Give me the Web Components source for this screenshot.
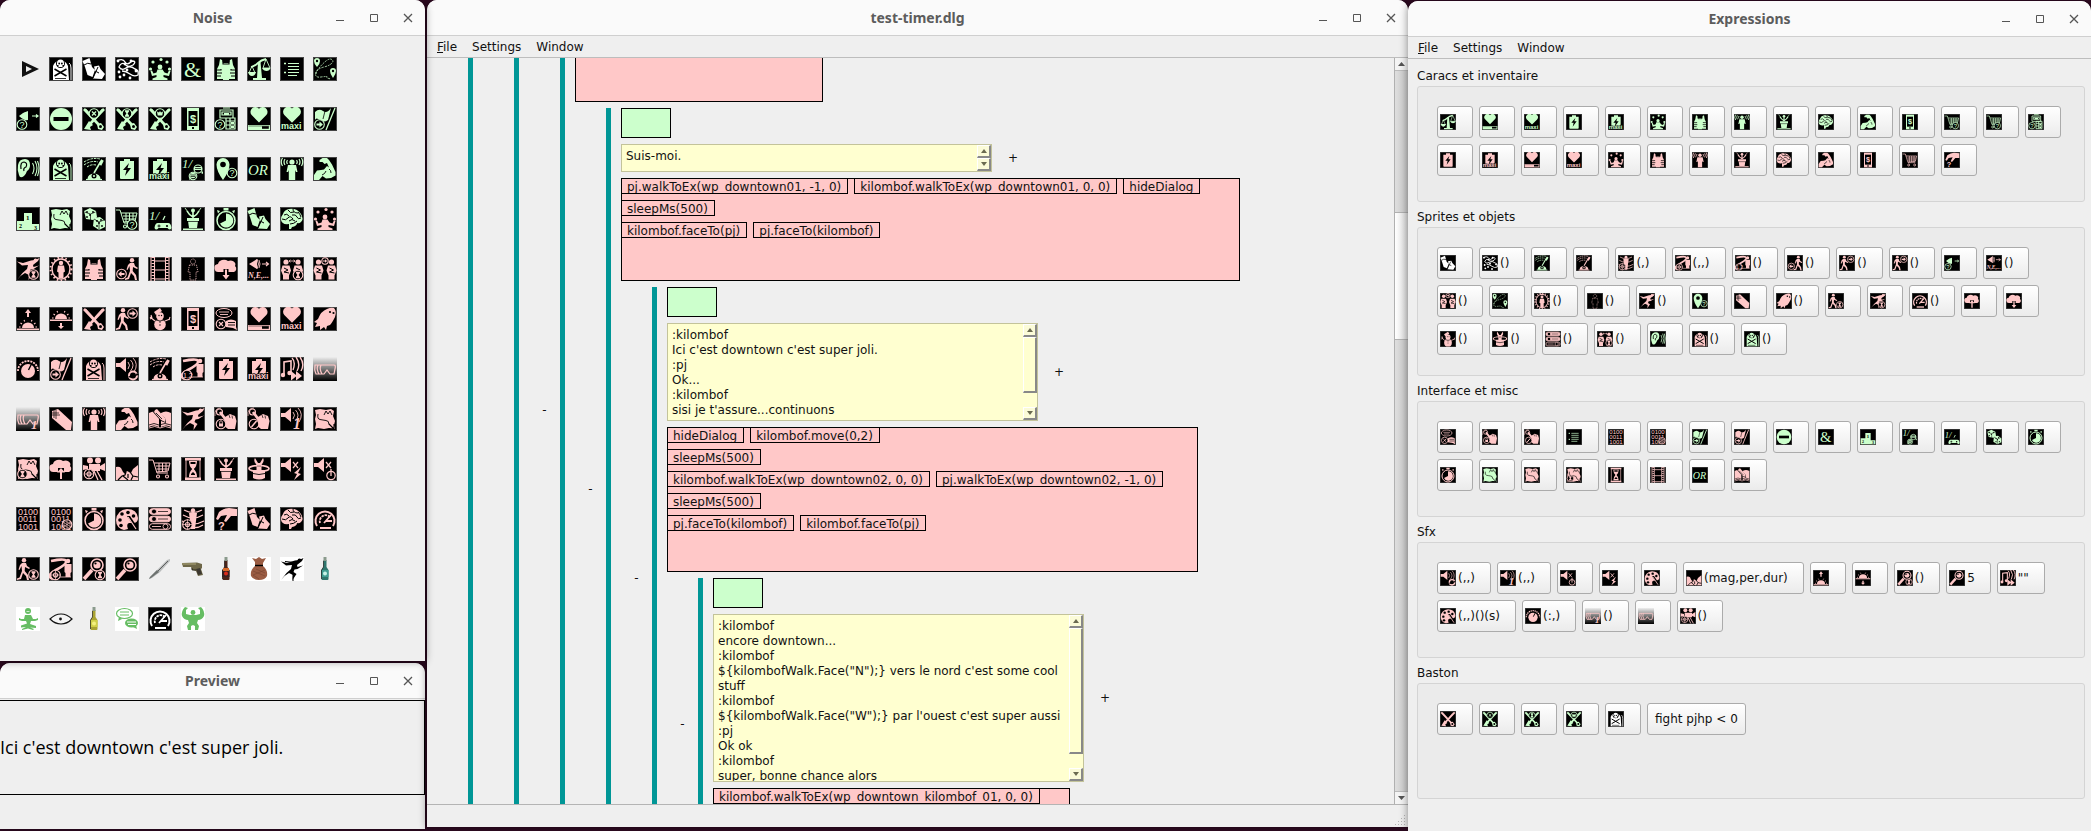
<!DOCTYPE html>
<html lang="fr">
<head>
<meta charset="utf-8">
<title>test-timer.dlg</title>
<style>
html, body { margin: 0; min-height: 100%; }
body { background: #2f0a22; font: 12px/15px "DejaVu Sans", sans-serif; color: #111; }
</style>
</head>
<body>
<desk-top>
  <div slot="left">
    <desk-window heading="Noise" class="over">
      <icon-palette icons="play:x grave:w boots:w trail:w juggle:g amp:g vest:g scales:g list:g route:g
        lookq:g noentry:g fightx:g fighth:g fightc:g phone:g atm:g heartbar:g heartmaxi:g flag:g
        ear:g grave:g lever:g batt:g battmaxi:g onetalk:g pinq:g or:g charisma:g arm:g
        podium:g map:g dice:g cartq:g onepad:g pot:g timer:g boots:g brain:g juggle:p
        jumpi:p aura:p vest:p walkout:p film:p hidden:p clouddown:p lookdir:p facing:p meet:p
        sunup:p sundown:p swords:p walkin:p snowman:p phone:p talkx:p heartbar:p heartmaxi:p ghost:p
        knob:p flag:p grave:p sndloop:p lever:p roadone:p batt:p battmaxi:p music:p vr:p
        vrone:p log:p charisma:p arm:p book:p jump:p touchlock:p touchno:p sndone:p map:p
        mapi:p cloudup:p camera:p quake:p cart:p hourglass:p pot:p rabbit:p sndbolt:p sndoff:p
        bin:p binx:p timer:p palette:p sliders:p vortex:p handq:p boots:p brain:p gauge:p
        walki:p roadx:p magi:p mag:p knife:x gun:x bottler:x sack:b runner:b bottlet:x
        yoga:b eye:x bottley:x bubbles:b gauge:w muscle:b"></icon-palette>
    </desk-window>
    <desk-window heading="Preview" class="fill">
      <line-preview>Ici c'est downtown c'est super joli.</line-preview>
    </desk-window>
  </div>
  <desk-window slot="middle" heading="test-timer.dlg" class="fill">
    <menu-bar></menu-bar>
    <dialog-tree>
      <dialog-node bare>
        <dialog-node bare>
          <dialog-node lines="" rows="28" box="82" wide="248" code="">
            <dialog-node lines="Suis-moi." rows="28" box="103" wide="619"
              code="pj.walkToEx(wp_downtown01, -1, 0)|kilombof.walkToEx(wp_downtown01, 0, 0)|hideDialog;sleepMs(500);kilombof.faceTo(pj)|pj.faceTo(kilombof)">
              <dialog-node rows="98" box="145" wide="531" thumb="56"
                lines=":kilombof&#10;Ici c'est downtown c'est super joli.&#10;:pj&#10;Ok...&#10;:kilombof&#10;sisi je t'assure...continuons"
                code="hideDialog|kilombof.move(0,2);sleepMs(500);kilombof.walkToEx(wp_downtown02, 0, 0)|pj.walkToEx(wp_downtown02, -1, 0);sleepMs(500);pj.faceTo(kilombof)|kilombof.faceTo(pj)">
                <dialog-node rows="168" box="82" wide="357" thumb="126"
                  lines=":kilombof&#10;encore downtown...&#10;:kilombof&#10;${kilombofWalk.Face(&quot;N&quot;);} vers le nord c'est some cool stuff&#10;:kilombof&#10;${kilombofWalk.Face(&quot;W&quot;);} par l'ouest c'est super aussi&#10;:pj&#10;Ok ok&#10;:kilombof&#10;super, bonne chance alors"
                  code="kilombof.walkToEx(wp_downtown_kilombof_01, 0, 0)"></dialog-node>
              </dialog-node>
            </dialog-node>
          </dialog-node>
        </dialog-node>
      </dialog-node>
    </dialog-tree>
  </desk-window>
  <desk-window slot="right" heading="Expressions" class="fill">
    <menu-bar class="spaced"></menu-bar>
    <expression-group heading="Caracs et inventaire" items="scales:g heartbar:g heartmaxi:g batt:g battmaxi:g juggle:g vest:g charisma:g pot:g brain:g arm:g phone:g cartq:g cartq:g atm:g batt:p battmaxi:p heartbar:p heartmaxi:p juggle:p vest:p charisma:p pot:p brain:p arm:p phone:p cart:p handq:p"></expression-group>
    <expression-group heading="Sprites et objets" items="boots:w trail:w:() lever:g lever:p vortex:p:(,) roadx:p:(,,) roadone:p:() walkout:p:() walkin:p:() walkin:p:() lookq:g lookdir:p:() meet:p:() route:g aura:p:() hidden:p:() jump:p:() pinq:g log:p ghost:p:() walki:p jumpi:p gauge:p:() cloudup:p clouddown:p snowman:p:() rabbit:p:() sliders:p:() facing:p:() ear:g grave:p:() grave:g:()"></expression-group>
    <expression-group heading="Interface et misc" items="talkx:p touchlock:p touchno:p list:g bin:p binx:p flag:g flag:p noentry:g amp:g podium:g onetalk:g onepad:g dice:g timer:g timer:p map:g map:p mapi:p hourglass:p film:p or:g book:p"></expression-group>
    <expression-group heading="Sfx" items="sndloop:p:(,,) sndone:p:(,,) sndoff:p sndbolt:p palette:p quake:p:(mag,per,dur) sunup:p sundown:p magi:p:() mag:p:5 music:p:&quot;&quot; palette:p:(,,)()(s) knob:p:(:,) vrone:p:() vr:p camera:p:()"></expression-group>
    <expression-group heading="Baston" items="swords:p fightx:g fighth:g fightc:g grave:w none:x:fight_pjhp_&lt;_0"></expression-group>
  </desk-window>
</desk-top>

<script>
/* ---------- icon drawings, on a 24 by 24 grid ---------- */
const line = (d, w = 1.2) => `<path d="${d}" fill="none" stroke="currentColor" stroke-width="${w}"/>`;
const cut = (d, w = 1.2) => `<path d="${d}" fill="none" stroke="#000" stroke-width="${w}"/>`;
const area = d => `<path d="${d}"/>`;
const hole = d => `<path d="${d}" fill="#000"/>`;
const dot = (x, y, r) => `<circle cx="${x}" cy="${y}" r="${r}"/>`;
const pit = (x, y, r) => `<circle cx="${x}" cy="${y}" r="${r}" fill="#000"/>`;
const ring = (x, y, r, w = 1.1) => `<circle cx="${x}" cy="${y}" r="${r}" fill="#000" stroke="currentColor" stroke-width="${w}"/>`;
const word = (t, x, y, size, extra = '') => `<text x="${x}" y="${y}" font-size="${size}" ${extra}>${t}</text>`;
const paint = (d, c) => `<path d="${d}" fill="${c}"/>`;
const sans = 'font-family="Liberation Sans, sans-serif"';
const serif = 'font-family="Liberation Serif, serif"';

const ask = (x, y) => ring(x, y, 4.8) + word('?', x - 2.5, y + 3.2, 9, sans);
const glass = (x, y) => ring(x, y, 4.8) + area(`M${x - 2} ${y - 3.2}h4v1.2l-1.4 2 1.4 2v1.2h-4v-1.2l1.4-2-1.4-2z`);
const cross = (x, y) => ring(x, y, 4.8) + line(`M${x - 2} ${y - 2}l4 4m0-4l-4 4`);
const target = (x, y) => ring(x, y, 4.8) + ring(x, y, 2) + line(`M${x - 5} ${y}h10M${x} ${y - 5}v10`, .7);
const right = (x, y) => ring(x, y, 4.8) + area(`M${x - 3} ${y - 1}h3v-2l3.4 3-3.4 3v-2h-3z`);
const left = (x, y) => ring(x, y, 4.8) + area(`M${x + 3} ${y - 1}h-3v-2l-3.4 3 3.4 3v-2h3z`);
const speaker = area('M1 6h4l6-5v14l-6-5H1z');
const rings = line('M13 5q3 3 0 7M15.500 3q5 5 0 11M18 1q6 6 1 14', .9);
const walker = dx => `<g transform="translate(${dx} 0)">` + dot(7, 3.2, 2.2) + area('M5 6h4l1 3 3 2-1 1-4-2-.3 4 3.300 4 1 5h-2l-1-4-3-3-2 6-4 1 0-1.500 2.500-1L5 14 4.500 9l-2 4-1-.6L3 8z') + '</g>';
const runner = dot(19.500, 3.300, 1.900) + area('M23.500 1l-1.500 3-5 4 .5 2 5.500-1.500-5.500 3.500-3 .5-1 2.500 3 2-4 6 .5-5-4-2-4.500 3L1 23l5.500-7L11 12l1-4-6 .5L1 4.500l6 1.500 8-2.500 4-.5z');
const cloud = area('M5 15a4 4 0 0 1-1-8 6 5 0 0 1 10-3 5 4 0 0 1 7 5 3.500 3.500 0 0 1-1 6z');
const heart = (y, s) => `<path transform="translate(12 ${y}) scale(${s})" d="M0 8L-7 1A4 4 0 0 1 0-5 4 4 0 0 1 7 1z"/>`;
const cell = area('M9 2h6v2h4v17q0 1-1 1H6q-1 0-1-1V4h4z') + hole('M14 6l-6 7h3.500l-1.500 6 6-8h-3.500z');
const maxi = word('maxi', 1, 22, 9, sans + ' font-weight="bold" stroke="#000" stroke-width="1.500" paint-order="stroke"');
const cartShape = line('M1 3h4l4 13h11M6 6h16l-2 8-11 1M8 9h13M8.500 12h12M11 6v9M14.500 6v9M18 6v9', 1) + ring(10, 19.500, 1.500) + ring(19, 19.500, 1.500);
const mapShape = area('M2 3l5-1 6 1 5-1 3 2-1 5 2 5-1 4 1 4-6-1-5 1-6-1-3 1 1-5-1-5 1-4z') + cut('M5 7q-1 5 2 5.500t6 1q3 0 3 4', .9) + cut('M11 8l2-4 2 3 2-3 2 4', .9) + cut('M16 17l5 5m0-5v5h-5', 1.1);
const blades = line('M2 2l15 16M22 2L8 17', 2.6) + line('M4 2l8 9M20 2l-7 8', .8) + area('M2 22l5-8 4 4-3 2 1 3zM22 20l-2 3-4-1-1-5 4-1z') + pit(18.500, 19.500, 1.500);
const graveShape = area('M4 23V9a8 8 0 0 1 15 0l1 14z') + line('M20 6q2 1 2 5v12', 1) + pit(11.500, 6.500, 4.500) + area('M8 6a3.500 3.500 0 0 1 7 0v2h-1.500v2h-4V8H8z') + pit(10.200, 6.500, .9) + pit(12.900, 6.500, .9) + cut('M5.500 12l12 7M17.500 12l-12 7', 1.5) + cut('M6 21.500h11', .8);
const magShape = line('M2 22L10 13', 3.6) + ring(15, 8, 6, 1.6) + dot(15, 8, 3.6) + pit(13.500, 6.500, 1.1);
const visor = `<defs><linearGradient id="v" x2="0" y2="1"><stop offset="0" stop-color="#eee"/><stop offset="1" stop-color="#000"/></linearGradient></defs><rect width="24" height="24" fill="url(#v)"/>` + line('M2 8h19q2 0 1 4l-1 5h-4l-3-4-3 4H3q-2-4-1-9zM5 8q-2 4 1 9M8 8q-2 4 1 9');
const binary = word('0100', 2, 7.500, 9, sans) + word('0011', 2, 15, 9, sans) + word('1001', 2, 22.500, 9, sans);
const road = line('M2 4q14-3 15 0T7 13 4 22', 2.6) + dot(19, 4, 2.3) + area('M15.500 7h7v8l-1 1v4h-5v-4l-1-1z') + line('M11 20h11', .8);
const touch = ring(5.500, 5, 3) + line('M6 5l6 8', 2.8) + area('M11 10l5-3 5 2 1.500 5-1.500 8h-7l-5-4-4-4q1-2 6 1z') + cut('M15 8l1 3M18 8.500l.5 3', .7) + line('M1 9q-1-8 6-8', .7);
const sunRays = y => area(`M6 ${y}a6 5.500 0 0 1 12 0z`) + line(`M3 ${y - 1}h1.600M19.500 ${y - 1}H21M4.500 ${y - 5}l1.500 1M19.500 ${y - 5}l-1.500 1M8 ${y - 8}l.7 1.500M16 ${y - 8}l-.7 1.500`, 1.1);
const bust = x => dot(x, 5, 2.6) + area(`M${x - 3.500} 8.500h7l1.500 5-2 5v4h-6v-4l-2-5z`) + cut(`M${x - 2} 11l4 2-4 2 5 1`, 1);
const flagShape = area('M2 5q4-4 8-1t8-3L15 13q-4 3-8 0t-5 0z') + line('M22 1L13 23', 1.3) + cut('M12 4l-2 8', .8);
const bottle = (body, label, mark) => paint('M10.500 3h3v7l2 3v9q0 1-1 1h-5q-1 0-1-1v-9l2-3z', body) + paint('M10.500 0h3v4h-3z', '#8a9a8c') + paint('M8.500 13h7v7h-7z', label) + `<circle cx="12" cy="16.500" r="2" fill="${mark}"/>` + cut('M10.500 4v6l-2 3v9', .6);

const ICONS = {
  play: '<path fill-rule="evenodd" fill="#111" d="M6 4l17 8L6 20zM10 9v6l6-3z"/>',
  grave: graveShape,
  boots: area('M.5 4L7.500 1l2.500 9 3 3-2.500 7-5-2L3 10zM12 9.500l5-1 1.500 3.500 4.500 5-3 5-9-.5 2.500-6z') + cut('M2 8q4-3 7-1M11 21l5-11M13 14l4 2', 1),
  trail: line('M2 4q6-3 8 1t7-1q5 0 1 4-6 3-8-1-4-2-6 3 3 4 7 1t9 1q4 1 3 6-4 2-8-1t-8-3', 1.3) + [[3, 4], [10, 7], [16, 4], [4, 15], [12, 13], [21, 14], [5, 20], [9, 18], [15, 21]].map(p => dot(p[0], p[1], 1.400)).join(''),
  juggle: [[5, 5], [13, 2.500], [19, 5], [2.500, 12], [21.500, 12]].map(p => dot(p[0], p[1], 1.600)).join('') + dot(12, 10, 2.400) + area('M9.500 12.500h5l2 3 3 1 1.500-3 1.500.5-1.500 5-5.500-1v2l4 1.500V23h-15v-1.500l4-1.500v-2L4 19l-1.500-5 1.500-.5 1.500 3 3-1z'),
  amp: word('&amp;', 3, 20, 22, serif),
  vest: area('M6 2l2 1 1 3h6l1-3 2-1 1 6 2 4v10h-6v1H9v-1H3V12l2-4z') + cut('M9 4v3h6V4M2 13h5v-1M2 16h6M2 19h5M22 13h-5v-1M22 16h-6M22 19h-5', 1.1),
  scales: line('M4 10q4-1 7-4t8-4', 1.800) + area('M11 5h2.500l1.500 16H10zM6 21h13v2H6z') + line('M5 9l-3 7h6zM19 2l-3 9h7z', .9) + area('M1 15h8q-1 4-4 4t-4-4zM15 11h8.500q-1 3-4 3t-4.500-3z'),
  list: line('M8 6.500h11M8 9.500h11M8 12.500h11M8 15.500h11M8 18.500h9', 1) + line('M4 6.500h2M4 15.500h2', 1.500),
  route: area('M4 1a3 3 0 0 1 3 3q0 3-3 6-3-3-3-6a3 3 0 0 1 3-3zM20 11a3 3 0 0 1 3 3q0 3-3 7-3-4-3-7a3 3 0 0 1 3-3z') + pit(4, 4, 1.200) + pit(20, 14, 1.200) + `<path d="M3 17q0-5 8-7t9-6q-2-4-7 0T3 15q-2 6 5 5t6 0 4 2" fill="none" stroke="currentColor" stroke-width=".8" stroke-dasharray="2 1"/>`,
  lookq: area('M3 9l4-3 5-2v9q-4 1-9-4z') + line('M9 5q3 3 1 8', 1) + line('M16 9h6M20 7.500l2 1.500-2 1.500', 1.200) + ask(6, 17.500),
  noentry: dot(12, 12, 11) + hole('M4.500 10h15v4h-15z'),
  fightx: blades + cross(12, 6.500),
  fighth: blades + glass(12, 6.500),
  fightc: blades + ring(12, 6.500, 4.800) + area('M9 4.500l2 1 1-1.500 1 1.500 2-1-.7 4h-4.600z'),
  phone: area('M6 1h12v22H6z') + hole('M7.500 4h9v15h-9z') + hole('M11 20h2v2h-2z') + word('$', 9, 15.500, 11, sans + ' font-weight="bold"'),
  atm: line('M6 3h13v8H6zM9 1h7M8 5h9v3H8zM12 11h9v11h-9zM12 14h9M12 18h9M16 11v11') + area('M10 6h5v2h-5zM17 15h3v2h-3zM17 19h3v2h-3z') + ask(6, 17.500),
  heartbar: heart(7, 1.050) + area('M1 18h22v5H1z') + hole('M15 19.200h6.800v2.600H15z') + cut('M1.500 19h21', .5),
  heartmaxi: heart(7, 1.100) + maxi,
  flag: flagShape + right(6.500, 17.500),
  ear: area('M9 2q5 0 5 6 0 4-3 6-1 3-3 5-4 3-5-1-2-5-1-10 1-6 7-6z') + cut('M5 12q-1-7 3-7 4 1 2 5-3 1-2 4', 1.200) + line('M16.500 6q3 5 0 11M19 4q4 7 0 15M21.500 4q3 7 0 15', 1.100),
  lever: line('M12 16L19 4', 1.600) + line('M18 8l2.500-5', 2.800) + area('M5.500 22a6.500 5.500 0 0 1 13 0z') + pit(12, 19, 2.500) + dot(12, 19, 1.100) + `<path d="M2 5q8-5 16-3M2 8q7-5 14-3M5 10q4-3 9-2" fill="none" stroke="currentColor" stroke-dasharray="2.500 1"/>` + line('M4 22.500h16'),
  batt: cell,
  battmaxi: cell + maxi,
  onetalk: word('1/', 1, 11, 13, serif + ' font-style="italic"') + ring(17, 12, 4) + area('M13 10h8v3h-8z') + ring(12, 19, 3.800) + dot(12, 18.500, 2.800) + cut('M10 18h4M10 19.500h4M14 11.500h6', .7) + area('M8 23l3-2-2-1zM20 16l2 1 0-3z'),
  pinq: area('M9 1a6.500 6.500 0 0 1 6.500 6.500Q15.500 14 9 23 2.500 14 2.500 7.500A6.500 6.500 0 0 1 9 1z') + pit(9, 7.500, 2.800) + ask(18, 16),
  or: word('OR', 1, 17.500, 15, serif + ' font-style="italic"'),
  charisma: dot(12, 5, 2.600) + area('M8 8h8l1.500 7H16l-.8-2v10H8.800V13L8 15H6.500z') + line('M7.500 3q-1.500 2 0 4M5 2Q3 5 5 8M2.500 1q-2.500 4 0 8M16.500 3q1.500 2 0 4M19 2q2 3 0 6M21.500 1q2.500 4 0 8'),
  arm: area('M6.500 3l3-2H14l2 2 3 4.500 3.500 7.500v3.500L18 21l-5 .5-3.500-2.500L6 23H1v-5l3-4.500 4-.5 3-.5 3-3.500 2 1.500-2-4.500-2.500 1-2-2H6.500z') + cut('M9 18q3-1 4-4M16 12q2 1 2 4', .9),
  podium: area('M8 6h8v11h7v6H1v-9h7z') + `<g fill="#000">${word('1', 10, 13, 7, serif + ' font-weight="bold"')}${word('2', 3, 20.500, 6, serif + ' font-weight="bold"')}${word('3', 18, 22.500, 6, serif + ' font-weight="bold"')}</g>`,
  map: mapShape,
  mapi: mapShape + glass(6.500, 17),
  dice: area('M2 4l6-3 6 3 1 6-4 3-7-1zM12 11l6-1 5 4 0 6-6 3-6-4z') + [[5, 5], [8, 8], [11, 5], [5, 10], [15, 14], [19, 13], [15, 19], [20, 19], [17, 16]].map(p => pit(p[0], p[1], .9)).join('') + cut('M2.500 5l6 2 5-2M8.500 7l0 6M12 12l5 3 5-2M17 15v8', .7),
  cart: cartShape,
  cartq: cartShape + ask(17, 17.500),
  onepad: word('1/', 1, 13, 13, serif + ' font-style="italic"') + area('M10 16h10q3 0 3.500 5-1.500 3-4 0h-9q-2.500 3-4 0 .5-5 3.500-5z') + cut('M9.500 19h3M11 17.500v3', .9) + pit(19, 19, 1.100) + line('M17 9l-2 4'),
  pot: area('M6 11h12v3h-1l-1 7H8l-1-7H6zM2 21.500h20V23H2z') + line('M12 11V5M12 10Q8 8 6 4M12 10q4-2 6-6', 1.600) + dot(12, 3.500, 2) + cut('M7 14.500h10', .7) + line('M4 1l3 4M20 1l-3 4', .9),
  timer: ring(12, 13.500, 9, 1.500) + area('M12 6.500a7 7 0 1 1-6 10L12 13.500z') + area('M9.500 1h5v2.500h-5zM3 3l3 1-2 2.500zM21 3l-3 1 2 2.500z'),
  brain: area('M3 7q1-4 6-5 8-1 12 5 3 5 0 8-2 2-4 1 0 3-5 4l-1 2h-2l0-5q-7 1-8-4 0-4 2-6z') + cut('M4 8q3-2 5 1M8 3q2 4 6 2M13 2q0 4 5 4M2 12q4 2 6-1t5 1M12 8q4-1 5 2t4 1M9 14q3-3 6 0M18 5q2 2 3 5M10 17q4 0 7-3', 1),
  jump: runner,
  jumpi: runner + glass(17.500, 17.500),
  aura: `<ellipse cx="12" cy="12" rx="9" ry="10" fill="none" stroke="currentColor" stroke-width="1.500"/>` + `<ellipse cx="12" cy="12" rx="10.500" ry="11.500" fill="none" stroke="currentColor" stroke-width="2" stroke-dasharray="1.500 2.500"/>` + dot(12, 6, 2.200) + area('M9 8.500h6l1 6-1.500 1V21h-5v-5.500L8 14.500z'),
  walkout: walker(10) + left(6.500, 17),
  walkin: walker(1) + right(17.500, 6.500),
  walki: walker(1) + glass(17.500, 17.500),
  film: line('M3 0v24M6.500 0v24M17.500 0v24M21 0v24M6 4h12M6 13h12M6 22h12', 1.100) + `<path d="M4.800 0v24M19.300 0v24" stroke="currentColor" stroke-width="2.500" stroke-dasharray="1 2"/>`,
  hidden: `<g fill="none" stroke="currentColor" stroke-width=".8" stroke-dasharray="1.200 1">${dot(12, 4.500, 2.500)}${area('M8.500 8h7l1.500 7h-2v8h-6v-8H7z')}</g>`,
  clouddown: cloud + hole('M9.500 12h5v5h-5z') + area('M11 12.500h2V18h2.500L12 22.500 8.500 18H11z'),
  cloudup: cloud + hole('M9 11h6v4H9z') + area('M12 11l4 4.500h-3V22h-2v-6.500H8z'),
  lookdir: area('M2 7l8-5v10z') + line('M10 2q3 5 0 10M12 3q2 4 0 8', .9) + line('M15 7h7M19 5l2.500 2L19 9', 1.100) + word('N,E,...', 1, 21, 8, serif + ' font-style="italic" font-weight="bold"'),
  facing: bust(6) + bust(18) + line('M9 4h6M10.500 2.800L9 4l1.500 1.200M13.500 2.800L15 4l-1.500 1.200', .8) + glass(18, 18),
  meet: bust(5.500) + bust(18.500) + ring(12, 4, 3.200) + area('M10 3.500h2V2.200L14.200 4 12 5.800V4.500h-2z'),
  sunup: sunRays(21) + area('M1 21.500h22V23H1zM12 2l3 4h-2v4h-2V6H9z'),
  sundown: sunRays(12) + area('M1 12.500h22V14H1zM12 22l-3-3h2v-3h2v3h2z'),
  swords: blades,
  snowman: dot(12, 9, 3.800) + dot(12, 17.500, 5.800) + area('M6 5l6-4 2 3-6 4z') + line('M7 14l-5-4M2 12l2-1M3 8l1 3M17 14l5-2M22 10l-1 3', 1.100) + pit(11, 8.500, .7) + pit(13.500, 8.500, .7) + pit(12, 15, .7) + pit(12, 18, .7) + cut('M8 13q4 2 8 0', .8),
  talkx: `<ellipse cx="10" cy="6" rx="8" ry="4.500" fill="none" stroke="currentColor"/>` + area('M12 14q5-3 10 0v6l1 3-4-2-7-1z') + line('M5 5h10M6 7.500h8', .9) + cut('M14 15.500h7M14 18h7', .9) + cross(7, 17),
  ghost: area('M21 1q3 3 1 9-3 6-5 8l-3 1-1 4-2-3-4 3v-4l-5 1 2-4-3-1 4-3q3-8 9-10 4-2 7-1z') + pit(17, 5, 1.100) + pit(20.500, 6, 1.100),
  knob: dot(12, 14, 7) + cut('M12.500 13l3-6', 1.400) + `<path d="M2 14a10 10 0 0 1 20 0" fill="none" stroke="currentColor" stroke-width="1.800" stroke-dasharray="2 1"/>`,
  sndloop: speaker + rings + ring(18, 18.500, 4, 2) + hole('M13 20l3-2 1 3zM20 19l2-3 2 2z'),
  roadone: road + ring(6, 18, 4.800) + word('1,2', 2, 20.500, 7, sans),
  roadx: road + target(6.500, 18),
  music: line('M4 17V5l7-1v11', 1.600) + dot(3, 18, 2.200) + dot(9.500, 16, 2.200) + line('M12 1q4 4 1 12M16 0q5 7 1 14M20 0q5 7 1 14', 1.400) + area('M11 14l5 4v-4l6 5-6 4.500v-4l-5 4z'),
  vr: visor,
  vrone: visor + word('1', 15, 22, 13, serif + ' font-style="italic" font-weight="bold"'),
  log: area('M3 4l6-2 14 13-1 8h-5L3 11z') + cut('M5 3v8M7 3v9M3 6h7M3 8h8', .7),
  book: area('M1 6q5-3 10 0v14q-5-3-10 0zM23 6q-5-3-10 0v14q5-3 10 0z') + hole('M7 2l10 9 1 5-5-2L5 5z') + area('M7 3l2-1 8 9v4l-4-2-7-8z') + cut('M8 6l6 6M1 18q5-3 10 0 6-3 12 0', .8) + line('M1 21q6-3 11 0 5-3 11 0', .9),
  touchlock: touch + ring(7, 17, 4.800) + area('M5 16.500h4v3H5z') + line('M5.700 17v-2a1.300 1.300 0 0 1 2.600 0v2', .8),
  touchno: touch + ring(7, 17, 4.800) + line('M4.500 20L9.500 14', 1.500),
  sndone: speaker + rings + word('1', 13, 22, 16, serif + ' font-style="italic" font-weight="bold"'),
  camera: dot(8, 3.500, 3) + dot(16, 3.500, 3) + area('M7 7h11v2l5-3v8l-5-2v2H7zM1 8l5 1v3l-5 1z') + line('M12 14l4 9M15 14l5 9', 1.300) + target(7, 17),
  quake: area('M1 10q3-1 5 1l2 4 2 2 2-3 4 2 2-4 5-4v15H1z') + cut('M3 23l4-4 3-1 1-3M8 19l5 4M23 20l-5-1-3-4M18 19l-2 4M13 17v4', 1.200),
  hourglass: area('M4 1h16v2.500H4zM4 20.500h16V23H4zM8 4h8q0 5-3.200 8Q16 15 16 20H8q0-5 3.200-8Q8 9 8 4z') + line('M5 3v18M19 3v18', .9) + hole('M9.500 5h5v2h-5zM10 17l2-2 2 2v1h-4z'),
  rabbit: area('M6 13h12v8q-6 3-12 0zM9.500 8Q6 4 8 1l3 5h2l3-5q2 3-1.500 7v5h-5z') + `<ellipse cx="12" cy="11.500" rx="10" ry="3" fill="none" stroke="currentColor" stroke-width="1.600"/>` + cut('M6 16.500q6 2 12 0', .9) + pit(11, 9, .6) + pit(13, 9, .6),
  sndbolt: speaker + line('M13 5l5 6M18 5l-5 6', 1.200) + area('M21 10l-7 6 3 1-3 6 7-6-3-1z'),
  sndoff: speaker + line('M13 5l5 6M18 5l-5 6', 1.200) + ring(18, 18.500, 4.200, 1.200) + line('M18 12v7', 1.300),
  bin: binary,
  binx: binary + ring(18, 17.500, 4.800) + line('M14 15l8 5M14 18l6 3M16 14l6 3M14 20l8-5M15 14v7M18 13v9M21 14v7', .6),
  palette: area('M12 2q10 0 11 9 0 5-5 5h-4q-3 1-1 6l-4 1Q1 21 1 13 2 3 12 2z') + pit(7, 7, 1.800) + pit(13, 5.500, 1.800) + pit(18.500, 9, 1.800) + pit(5, 13, 1.800) + pit(6, 18.500, 1.800) + hole('M12 9l3 0 8 12-2 2z') + line('M13 10l8 12', 1.200),
  sliders: [4.500, 12, 19.500].map((y, i) => `<rect x="1.500" y="${y - 2.800}" width="21" height="5.600" rx="2.800" fill="${i < 2 ? 'currentColor' : '#000'}" stroke="currentColor"/>` + ring(i < 2 ? 6 : 17.500, y, 2.500, .9)).join('') + cut('M10 4.500h10M10 12h10', .7) + line('M4 19.500h9', .9),
  vortex: dot(12, 3.500, 2.200) + area('M8 6h8l-1 8-1 8h-4L9 14z') + line('M3 3q9 5 18 0M2 8q10 6 20 0M1 14q11 6 22 0M9 20q7 2 13-2', 1.100) + target(6.500, 17.500),
  handq: area('M5 5q5-4 10-4l8 1v7l-6 0-5 6-2-1 3-6-6 1-3 4-2-1z') + word('?', 4, 23, 11, sans + ' font-weight="bold"'),
  gauge: `<path d="M4 19a9.500 9.500 0 1 1 16 0" fill="none" stroke="currentColor" stroke-width="2"/>` + `<path d="M7 16a6 6 0 0 1 10-6" fill="none" stroke="currentColor" stroke-width="1.800" stroke-dasharray="2.500 .8"/>` + line('M11 16l7-8M13 14h6', 1.800) + area('M7 20h11v2H7z'),
  mag: magShape,
  magi: magShape + glass(18, 18),
  knife: paint('M22 2l-3 1L9 13l-7 7-1 2 3-1 8-6L22 4z', '#b9bcbc') + paint('M9 13l2 2-8 6-2 1 1-2z', '#6d7270') + cut('M20 4L10 14', .5),
  gun: paint('M1 6l15-.5 5 1.500v4l-1 1 2 6-5 1-2-5-4-1-1-3-8 0z', '#6e6748') + paint('M1 6h14v2H1z', '#8e8761') + paint('M15 12l4-1 2 6-4 1z', '#3c3830') + cut('M11 11v2h4', .6),
  bottler: bottle('#4b2419', '#3a2020', '#d92b1c') + paint('M9 11h6v3H9z', '#d86a2a'),
  sack: paint('M8 5L5 1l4 1 3-2 3 2 4-1-3 5v3q5 4 4 10-2 4-8 4t-8-4Q3 13 8 9z', '#9a5c43') + cut('M8 8.500h8', 1.400) + `<path d="M6 14l12 5M6 18l6 4M9 12l9 4M18 13l-12 5" stroke="#7d4733" stroke-width=".7"/>`,
  runner: `<g fill="#000">${runner}</g>` + cut('M5 4.500l9 1M13 17v7', 1),
  bottlet: bottle('#2f766d', '#3f9c91', '#c7f2e7'),
  yoga: `<g fill="#66bd63">${dot(12, 4, 3)}${area('M9 8h6l2 4 3 0 2-1v2l-3 1-4 0-1 3 6 2v2l-6-.5 4 1.500-1 1-5-1.500L6 23l0-1 4-2-5 .5v-2l6-2-1-2.500-4 0-3-1v-2l2 1 3 0z')}</g>` + '<path d="M10.500 4.500h3" stroke="#fff" stroke-width=".7"/>',
  eye: `<path d="M1 12q5-5 11-5t11 5q-5 5-11 5T1 12z" fill="#f5f5f5" stroke="#111" stroke-width="1.200"/><circle cx="11.500" cy="12" r="1.400" fill="#111"/>`,
  bottley: bottle('#a9a332', '#d0cf47', '#f3f080'),
  bubbles: `<g color="#66bd63" fill="#66bd63"><ellipse cx="9.500" cy="6.500" rx="8" ry="5" fill="none" stroke="currentColor" stroke-width="1.200"/><path d="M4 10l-1 4 4-2z"/><ellipse cx="16.500" cy="16" rx="6.500" ry="4.500"/><path d="M18 20l4 2-1-4z"/></g><path d="M5 5h9M5 8h9" stroke="#66bd63"/><path d="M12 15h9M13 17.500h8" stroke="#fff"/>`,
  muscle: `<g fill="#66bd63">${dot(12, 5.500, 2.400)}${area('M9 8h6l4-1V3l-2-2 3-1q4 4 3 9-2 4-6 4l-1 3 2 3-1 4h-3v-4l-2-1-2 1v4H7l-1-4 2-3-1-3q-4 0-6-4Q0 4 4 0l3 1-2 2v4z')}</g>`,
  none: ''
};
const INK = { g: '#ccffcc', p: '#ffc8c8', w: '#fff', x: '#111', b: '#111' };
const GROUND = { x: '', b: '<rect width="24" height="24" fill="#fff"/>' };
const PANEL = '<rect width="24" height="24" fill="#000"/><rect x=".5" y=".5" width="23" height="23" fill="none" stroke="#444"/>';

const element = (name, css, html, setup) => customElements.define(name, class extends HTMLElement {
  constructor() {
    super();
    this.attachShadow({ mode: 'open' });
  }
  connectedCallback() {
    if (this.shadowRoot.childNodes.length) return;
    const body = typeof html === 'function' ? html(this) : html;
    this.shadowRoot.innerHTML = `<style>${css}</style>${body}`;
    if (setup) setup(this, this.shadowRoot);
  }
});
const esc = s => s.replace(/&/g, '&amp;').replace(/</g, '&lt;').replace(/"/g, '&quot;');

element('glyph-icon', `
  :host { display: block; width: var(--glyph, 24px); height: var(--glyph, 24px); flex: none; }
  svg { display: block; width: 100%; height: 100%; }`,
  el => {
    const tone = el.getAttribute('tone');
    const ground = tone in GROUND ? GROUND[tone] : PANEL;
    return `<svg viewBox="0 0 24 24" aria-hidden="true" color="${INK[tone]}" fill="currentColor">${ground}${ICONS[el.getAttribute('name')]}</svg>`;
  });

element('desk-top', `
  :host { display: grid; grid-template-columns: minmax(0, 425fr) minmax(0, 983fr) minmax(0, 683fr); min-height: 100vh; overflow: hidden; }
  .col { display: flex; flex-direction: column; min-width: 0; }
  .left { padding-bottom: 2px; }
  .middle { padding: 0 0 4px 2px; }
  .right { padding-top: 1px; position: relative; }
  ::slotted(div) { display: flex; flex-direction: column; flex: 1; gap: 2px; }
  ::slotted(desk-window) { flex: 1; }`,
  `<div class="col left"><slot name="left"></slot></div><div class="col middle"><slot name="middle"></slot></div><div class="col right"><slot name="right"></slot></div>`);

element('desk-window', `
  :host { display: flex; flex-direction: column; background: #efefef; border-radius: 10px 10px 0 0; box-shadow: 0 0 8px rgba(0,0,0,.45); min-width: 0; }
  :host(.fill) { flex: 1; }
  :host(.over) { position: relative; z-index: 1; }
  header { display: grid; grid-template-columns: 1fr auto 1fr; align-items: center; height: 35px; background: #fafafa; border-bottom: 1px solid #cfcfcf; border-radius: 10px 10px 0 0; }
  h1 { grid-column: 2; margin: 0; font: bold 14px/20px "Noto Sans", sans-serif; color: #5c5c5c; }
  nav { display: flex; justify-content: flex-end; }
  button { width: 34px; height: 34px; border: 0; padding: 0; background: none; display: grid; place-items: center; }
  svg { width: 10px; height: 10px; fill: none; stroke: #555; }`,
  el => `<header><h1>${el.getAttribute('heading')}</h1><nav>
    <button aria-label="Réduire"><svg viewBox="0 0 10 10"><path d="M1 7.500h8"/></svg></button>
    <button aria-label="Agrandir"><svg viewBox="0 0 10 10"><path d="M1.500 1.500h7v7h-7z"/></svg></button>
    <button aria-label="Fermer"><svg viewBox="0 0 10 10"><path d="M1 1l8 8M9 1L1 9" stroke-width="1.300"/></svg></button></nav></header><slot></slot>`);

element('icon-palette', `
  :host { display: grid; grid-template-columns: repeat(10, 24px); gap: 26px 9px; padding: 21px 16px 30px; }`,
  el => el.getAttribute('icons').trim().split(/\s+/).map(i => {
    const [name, tone] = i.split(':');
    return `<glyph-icon name="${name}" tone="${tone}"></glyph-icon>`;
  }).join(''));

element('line-preview', `
  :host { display: block; padding-top: 1px; }
  p { margin: 0; border: 1px solid #000; border-left: 0; font: 18px/93px "Open Sans", sans-serif; color: #000; white-space: nowrap; overflow: hidden; }`,
  '<p><slot></slot></p>');

element('menu-bar', `
  :host { display: flex; gap: 15px; padding: 4px 10px 2px; border-bottom: 1px solid #bdbdbd; }
  :host(.spaced) { margin-bottom: 2px; }
  button { font: inherit; color: inherit; background: none; border: 0; padding: 0; }`,
  '<button><u>F</u>ile</button><button>Settings</button><button>Window</button>');

element('dialog-tree', `
  :host { display: flex; flex-direction: column; flex: 1; }
  .area { display: flex; flex: 1; min-height: 0; border-bottom: 1px solid #b4b4b4; }
  .view { flex: 1 1 0; min-width: 0; height: 0; min-height: 100%; overflow: hidden; }
  .tree { padding-left: 10px; }
  .bar { display: flex; flex-direction: column; width: 13px; border-left: 1px solid #b0b0b0; background: linear-gradient(90deg, #dedede, #c8c8c8); }
  .bar button { border: 0; padding: 0; height: 13px; background: #f4f4f4; border-bottom: 1px solid #bbb; display: grid; place-items: center; }
  .bar .low { border: 0; border-top: 1px solid #bbb; margin-top: auto; }
  .bar svg { width: 7px; height: 4px; fill: #555; }
  .gap { flex: 141 1 0; }
  .rest { flex: 450 1 0; }
  .thumb { flex: 126 1 0; background: linear-gradient(90deg, #fff, #dcdcdc); border: solid #b0b0b0; border-width: 1px 0; }
  footer { height: 22px; display: flex; justify-content: flex-end; align-items: flex-end; }
  footer svg { width: 13px; height: 13px; fill: #b4b4b4; }`,
  `<div class="area"><div class="view"><div class="tree"><slot></slot></div></div>
   <div class="bar"><button aria-label="Monter"><svg viewBox="0 0 7 4"><path d="M0 4l3.500-4L7 4z"/></svg></button><div class="gap"></div><div class="thumb"></div><div class="rest"></div>
   <button class="low" aria-label="Descendre"><svg viewBox="0 0 7 4"><path d="M0 0l3.500 4L7 0z"/></svg></button></div></div>
   <footer><svg viewBox="0 0 13 13"><path d="M9 1h1v1H9zM6 4h1v1H6zM9 4h1v1H9zM3 7h1v1H3zM6 7h1v1H6zM9 7h1v1H9zM0 10h1v1H0zM3 10h1v1H3zM6 10h1v1H6zM9 10h1v1H9z"/></svg></footer>`,
  (el, root) => requestAnimationFrame(() => { root.querySelector('.view').scrollTop = 108; }));

element('dialog-node', `
  :host { display: grid; grid-template-columns: 31px 5px minmax(0, 1fr); }
  .toggle { align-self: center; font: inherit; color: inherit; border: 0; background: none; padding: 0; }
  .stem { background: #009696; }
  .body { padding-left: 10px; display: flex; flex-direction: column; gap: 6px; }
  .cond { width: 48px; height: 28px; border: 1px solid #000; background: #ccffcc; }
  .speech { display: flex; align-items: center; }
  .frame { display: flex; width: 369px; border: 1px solid #c3c39a; background: #ffffd0; }
  textarea { flex: 1; min-width: 0; box-sizing: border-box; border: 0; margin: 0; padding: 4px 0 0 4px; resize: none; outline: 0; overflow: hidden; background: none; font: inherit; color: inherit; }
  .scroll { width: 14px; display: flex; flex-direction: column; }
  .scroll button, .scroll i { box-sizing: border-box; height: 13px; flex: none; width: 14px; padding: 0; background: #fbfbd8; border: solid #888; border-width: 1px 2px 2px 1px; border-left-color: #fff; border-top-color: #fff; display: grid; place-items: center; }
  .scroll i { background: none; }
  .scroll button:last-child { margin-top: auto; }
  .scroll svg { width: 6px; height: 4px; fill: #6a6a50; }
  .add { font: inherit; color: inherit; border: 0; background: none; padding: 0; width: 10px; margin-left: 16px; }
  .code { box-sizing: border-box; border: 1px solid #000; background: #ffc8c8; display: flex; flex-direction: column; gap: 6px; }
  .row { display: flex; gap: 6px; margin: -1px 0 0 -1px; }
  .row + .row { margin-top: 0; }
  .chip { box-sizing: border-box; height: 16px; overflow: hidden; border: 1px solid #000; padding: 0 6px 0 5px; line-height: 16px; white-space: nowrap; }`,
  el => {
    if (el.hasAttribute('bare')) return '<span></span><span class="stem"></span><div class="body"><slot></slot></div>';
    const a = n => el.getAttribute(n);
    const rows = a('code') ? a('code').split(';').map(r => `<div class="row">${r.split('|').map(c => `<span class="chip">${esc(c)}</span>`).join('')}</div>`).join('') : '';
    const thumb = a('thumb') ? `<i style="height:${a('thumb')}px"></i>` : '';
    const add = a('lines') ? '<button class="add">+</button>' : '';
    return `<button class="toggle">-</button><span class="stem"></span><div class="body">
      <div class="cond"></div>
      <div class="speech"><div class="frame"><textarea aria-label="Réplique" spellcheck="false" style="height:${a('rows') - 2}px">${esc(a('lines'))}</textarea>
        <div class="scroll"><button aria-label="Monter"><svg viewBox="0 0 6 4"><path d="M0 4l3-4 3 4z"/></svg></button>${thumb}<button aria-label="Descendre"><svg viewBox="0 0 6 4"><path d="M0 0l3 4 3-4z"/></svg></button></div></div>
        ${add}</div>
      <div class="code" style="min-height:${a('box')}px;width:${a('wide')}px">${rows}</div>
      <slot></slot></div>`;
  });

element('expression-button', `
  :host { display: block; --glyph: 16px; }
  button { box-sizing: border-box; display: flex; align-items: center; gap: 2px; height: 32px; min-width: 36px; padding: 0 15px 0 2px; border: 1px solid #ababab; border-radius: 3px; background: linear-gradient(#fff, #ebebeb); font: inherit; color: inherit; white-space: nowrap; }
  :host([plain]) button { padding: 0 7px; }`,
  el => {
    const icon = el.getAttribute('icon');
    const label = el.textContent ? '' : ` aria-label="${icon}"`;
    return `<button${label}>${icon === 'none' ? '' : `<glyph-icon name="${icon}" tone="${el.getAttribute('tone')}"></glyph-icon>`}<slot></slot></button>`;
  });

element('expression-group', `
  :host { display: block; padding: 0 6px 0 9px; }
  h2 { margin: 0; padding: 7px 0 1px; font: inherit; line-height: 17px; }
  .box { box-sizing: border-box; min-height: 116px; padding: 19px 18px 20px 19px; display: flex; flex-wrap: wrap; align-content: flex-start; gap: 6px; border: 1px solid #d4d4d4; border-radius: 3px; background: #ebebeb; }`,
  el => {
    const items = el.getAttribute('items').split(' ').map(i => {
      const [name, tone, ...rest] = i.split(':');
      const text = esc(rest.join(':').replace(/_/g, ' '));
      return `<expression-button icon="${name}" tone="${tone}"${name === 'none' ? ' plain' : ''}>${text}</expression-button>`;
    }).join('');
    return `<h2>${el.getAttribute('heading')}</h2><div class="box">${items}</div>`;
  });
</script>
</body>
</html>
